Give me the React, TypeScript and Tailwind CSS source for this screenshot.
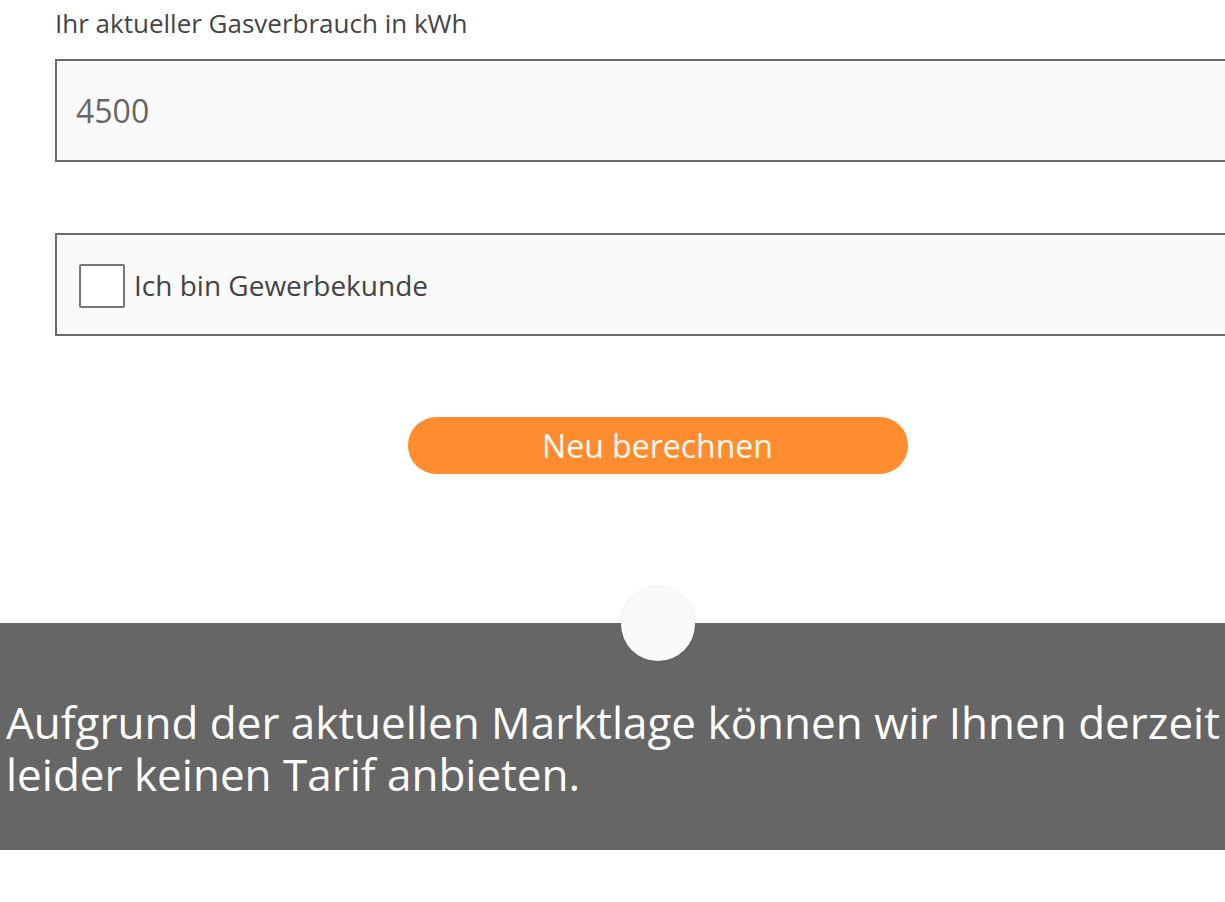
import React from "react";

export default function App() {
  return (
    <div
      className="w-[1225px] h-[902px] overflow-hidden bg-white"
      style={{ fontFamily: '"Open Sans", "Noto Sans", sans-serif' }}
    >
      <div className="w-[1315px]">
        <div className="px-[55px]">
          <div className="pt-[5px] text-[26px] leading-[36px] text-[#444444]">
            Ihr aktueller Gasverbrauch in kWh
          </div>
          <div className="mt-[18px] h-[103px] border-2 border-[#6b6b6b] bg-[#fafafa] flex items-center pl-[19px] text-[32px] text-[#666666]">
            4500
          </div>
          <div className="mt-[71px] h-[103px] border-2 border-[#6b6b6b] bg-[#fafafa] flex items-center pl-[22px]">
            <div className="w-[46px] h-[44px] border-2 border-[#777777] bg-white rounded-[2px] mt-[2px]" />
            <span className="ml-[9px] text-[28px] leading-[36px] text-[#444444]">
              Ich bin Gewerbekunde
            </span>
          </div>
          <div className="mt-[81px] flex justify-center">
            <button className="w-[500px] h-[57px] rounded-full bg-[#ff8d2f] text-[#fffaf0] text-[32px] leading-[40px] flex items-center justify-center">
              Neu berechnen
            </button>
          </div>
        </div>
        <div className="relative mt-[149px] h-[227px] bg-[#666666] pl-[6px] pt-[73px]">
          <div className="absolute -top-[36px] left-1/2 -translate-x-1/2 w-[74px] h-[74px] rounded-full bg-[#fafafa] shadow-[0_0_3px_rgba(0,0,0,0.12)]" />
          <p className="text-[44px] leading-[52px] text-white">
            Aufgrund der aktuellen Marktlage können wir Ihnen derzeit leider keinen Tarif anbieten.
          </p>
        </div>
      </div>
    </div>
  );
}
